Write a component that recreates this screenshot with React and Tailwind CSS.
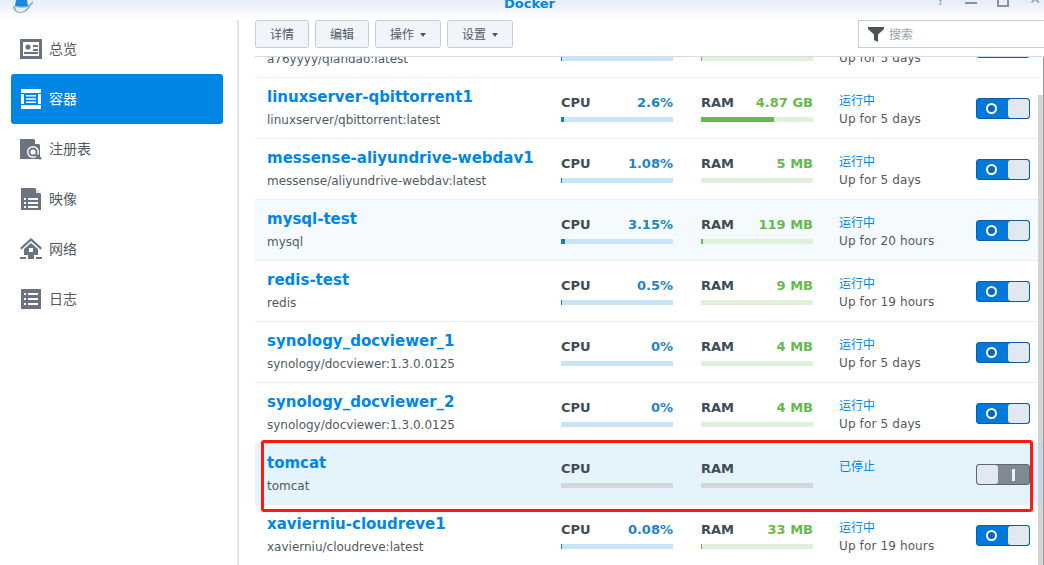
import React from 'react';

const font = 'font-["DejaVu_Sans","Noto_Sans_CJK_SC",sans-serif]';

const OverviewIcon = () => (
    <svg width="22" height="20" viewBox="0 0 22 20">
        <path fillRule="evenodd" fill="#6b7280" d="M0 0h22v20H0zM3 3v14h16V3z" />
        <circle cx="8" cy="8" r="2.600" fill="#6b7280" />
        <path d="M13 6h5v2h-5zM13 10h5v2h-5zM4 13h14v2H4z" fill="#6b7280" />
    </svg>
);

const ContainerIcon = () => (
    <svg width="20" height="20" viewBox="0 0 20 20" fill="#fff">
        <path fillRule="evenodd" d="M0 0h20v4H0zM0 16h20v4H0zM0 5h3v10H0zM17 5h3v10h-3zM5 6h10v1.500H5zM5 9.200h10v1.500H5zM5 12.500h10V14H5z" />
    </svg>
);

const RegistryIcon = () => (
    <svg width="22" height="21" viewBox="0 0 22 21">
        <path d="M0 0h14l6 6v14H0z" fill="#6b7280" />
        <path d="M15 0l5 5h-5z" fill="#fff" />
        <circle cx="13" cy="13" r="6" fill="#fff" />
        <circle cx="13" cy="13" r="3.600" fill="none" stroke="#6b7280" strokeWidth="2" />
        <path d="M16 16l5 4" stroke="#6b7280" strokeWidth="2.500" />
    </svg>
);

const ImageIcon = () => (
    <svg width="20" height="22" viewBox="0 0 20 22">
        <path d="M0 0h14l6 6v16H0z" fill="#6b7280" />
        <path d="M15 0l5 5h-5z" fill="#e5e7eb" />
        <path d="M3 10h2v2H3zM7 10h10v2H7zM3 14h2v2H3zM7 14h10v2H7zM3 18h2v2H3zM7 18h10v2H7z" fill="#fff" />
    </svg>
);

const NetworkIcon = () => (
    <svg width="22" height="22" viewBox="0 0 22 22">
        <path d="M11 0L0 10l1.500 1.500L11 3l9.500 8.500L22 10z" fill="#6b7280" />
        <path d="M4 11l7-6 7 6v6H4z" fill="#6b7280" />
        <rect x="9" y="10" width="4" height="4" fill="#fff" />
        <path d="M0 19h6v2H0zM16 19h6v2h-6zM8 17h6v4H8z" fill="#6b7280" />
    </svg>
);

const LogIcon = () => (
    <svg width="20" height="20" viewBox="0 0 20 20">
        <path d="M0 0h20v20H0z" fill="#6b7280" />
        <path d="M3 4h2v2H3zM7 4h10v2H7zM3 9h2v2H3zM7 9h10v2H7zM3 14h2v2H3zM7 14h10v2H7z" fill="#fff" />
    </svg>
);

const WhaleIcon = () => (
    <svg width="22" height="13" viewBox="0 0 22 13">
        <path d="M1 6c5 1 10 1 15 0 1-2 3-3 5-5 0 2 0 3-2 4-2 5-6 8-11 8C4 13 1 10 1 6z" fill="#8fb0c8" />
        <path d="M3 7c4 1 9 1 13 0-2 3-5 5-8 5-3 0-4-2-5-5z" fill="#e6f1fa" />
        <path d="M4 0h11l1 6c-4 1-9 1-13 0z" fill="#1e88dc" />
    </svg>
);

const navItems = [
    { name: '总览', icon: <OverviewIcon /> },
    { name: '容器', icon: <ContainerIcon />, active: true },
    { name: '注册表', icon: <RegistryIcon /> },
    { name: '映像', icon: <ImageIcon /> },
    { name: '网络', icon: <NetworkIcon /> },
    { name: '日志', icon: <LogIcon /> },
];

const containers = [
    { partial: true, image: 'a76yyyy/qiandao:latest', cpuPct: 1, ramPct: 1, status: 'Up for 5 days' },
    { name: 'linuxserver-qbittorrent1', image: 'linuxserver/qbittorrent:latest', cpu: '2.6%', cpuPct: 2.600, ram: '4.87 GB', ramPct: 65, status: 'Up for 5 days' },
    { name: 'messense-aliyundrive-webdav1', image: 'messense/aliyundrive-webdav:latest', cpu: '1.08%', cpuPct: 1.080, ram: '5 MB', ramPct: 0, status: 'Up for 5 days' },
    { name: 'mysql-test', image: 'mysql', cpu: '3.15%', cpuPct: 3.150, ram: '119 MB', ramPct: 1.500, status: 'Up for 20 hours', tint: true },
    { name: 'redis-test', image: 'redis', cpu: '0.5%', cpuPct: 0.500, ram: '9 MB', ramPct: 0, status: 'Up for 19 hours' },
    { name: 'synology_docviewer_1', image: 'synology/docviewer:1.3.0.0125', cpu: '0%', cpuPct: 0, ram: '4 MB', ramPct: 0, status: 'Up for 5 days' },
    { name: 'synology_docviewer_2', image: 'synology/docviewer:1.3.0.0125', cpu: '0%', cpuPct: 0, ram: '4 MB', ramPct: 0, status: 'Up for 5 days' },
    { name: 'tomcat', image: 'tomcat', stopped: true },
    { name: 'xavierniu-cloudreve1', image: 'xavierniu/cloudreve:latest', cpu: '0.08%', cpuPct: 0.080, ram: '33 MB', ramPct: 0.500, status: 'Up for 19 hours' },
];

const Toggle = ({ on }) =>
    on ? (
        <div className="flex h-[21px] w-[54px] rounded-[3px] border border-[#0b5fa8] bg-[#0079db]">
            <div className="flex w-[31px] items-center justify-center pr-[2px]">
                <div className="h-[11px] w-[11px] rounded-full border-[2px] border-white bg-[#0a62c4]" />
            </div>
            <div className="flex-1 rounded-[3px] bg-[#e1e8f2]" />
        </div>
    ) : (
        <div className="flex h-[21px] w-[54px] rounded-[3px] border border-[#5c6670] bg-[#7f8992]">
            <div className="w-[21px] rounded-[3px] bg-[#e1e8f2]" />
            <div className="flex flex-1 items-center justify-center">
                <div className="h-[12px] w-[3px] bg-[#eef1f4]" />
            </div>
        </div>
    );

const Meter = ({ label, value, pct, valueColor, trackColor, barColor }) => (
    <div className="w-[112px]">
        <div className="flex h-[15px] items-center justify-between text-[13px] font-bold leading-[15px]">
            {label && <span className="text-[#414b55]">{label}</span>}
            <span className={valueColor}>{value}</span>
        </div>
        <div className={`mt-[7px] h-[5px] ${trackColor}`}>
            <div className={`h-full ${barColor}`} style={{ width: `${pct}%` }} />
        </div>
    </div>
);

const ContainerRow = ({ item }) => {
    const bg = item.stopped ? 'bg-[#e5f3fd]' : item.tint ? 'bg-[#f5fafe]' : 'bg-white';
    return (
        <div className={`flex h-[61px] shrink-0 items-start border-b border-[#eceef0] ${bg}`}>
            <div className="w-[306px] pl-3 pt-[9px]">
                <div className="h-[20px] text-[15px] font-bold leading-[20px] text-[#0086e5]">{item.name}</div>
                <div className="mt-[4px] text-[12px] leading-[18px] text-[#505a64]">{item.image}</div>
            </div>
            <div className="pt-[17px]">
                <Meter
                    label={item.partial ? null : 'CPU'}
                    value={item.cpu}
                    pct={item.stopped ? 0 : item.cpuPct}
                    valueColor="text-[#1f84c4]"
                    trackColor={item.stopped ? 'bg-[#d3d6d9]' : 'bg-[#c9e3f7]'}
                    barColor="bg-[#1a7db8]"
                />
            </div>
            <div className="ml-7 pt-[17px]">
                <Meter
                    label={item.partial ? null : 'RAM'}
                    value={item.ram}
                    pct={item.stopped ? 0 : item.ramPct}
                    valueColor="text-[#66b94f]"
                    trackColor={item.stopped ? 'bg-[#d3d6d9]' : 'bg-[#e0f0da]'}
                    barColor="bg-[#65b94f]"
                />
            </div>
            <div className="ml-[26px] w-[137px] pt-[14px]">
                <div className="h-[18px] text-[12px] leading-[18px] text-[#0086e5]">
                    {item.partial ? '' : item.stopped ? '已停止' : '运行中'}
                </div>
                <div className="text-[12px] leading-[18px] tracking-[0.13px] text-[#505a64]">{item.status}</div>
            </div>
            <div className="pt-[20px]">
                <Toggle on={!item.stopped} />
            </div>
        </div>
    );
};

const ToolButton = ({ label, caret, width }) => (
    <button className={`flex h-[28px] items-center justify-center gap-[6px] rounded-[3px] border border-[#c4ccd8] bg-[#f1f5f9] pt-[1px] text-[12px] text-[#505a64] ${width}`}>
        {label}
        {caret && <span className="mt-[1px] h-0 w-0 border-x-[3.500px] border-t-[4px] border-x-transparent border-t-[#505a64]" />}
    </button>
);

export default function App() {
    return (
        <div className={`relative flex h-[565px] w-[1044px] flex-col overflow-hidden bg-white ${font}`}>
            {/* Title bar */}
            <div className="flex h-[20px] shrink-0 items-start overflow-hidden bg-gradient-to-b from-[#e4edf8] to-white">
                <div className="ml-3">
                    <WhaleIcon />
                </div>
                <div className="ml-[470px] -mt-[4px] text-[13px] font-bold leading-[16px] text-[#0086e5]">Docker</div>
                <div className="ml-auto mr-[3px] flex items-start gap-[20px] text-[#8a929a]">
                    <span className="-mt-[8px] w-[8px] text-[14px] leading-[16px]">?</span>
                    <span className="mt-[2px] h-[2px] w-[12px] bg-[#8a929a]" />
                    <span className="-mt-[4px] h-[11px] w-[12px] border-2 border-[#8a929a]" />
                    <span className="-mt-[9px] w-[12px] text-center text-[14px] leading-[16px]">✕</span>
                </div>
            </div>

            <div className="flex min-h-0 flex-1">
                {/* Sidebar */}
                <aside className="w-[239px] shrink-0 border-r-2 border-[#e3e5e8] pl-[11px] pr-[14px] pt-[4px]">
                    {navItems.map((item) => (
                        <div
                            key={item.name}
                            className={`flex h-[50px] items-center rounded-[3px] pl-[9px] text-[14px] ${item.active ? 'bg-[#0086e5] text-white' : 'text-[#505a64]'}`}
                        >
                            <div className="flex w-[22px] justify-center">{item.icon}</div>
                            <span className="ml-[7px]">{item.name}</span>
                        </div>
                    ))}
                </aside>

                {/* Main */}
                <main className="relative flex min-w-0 flex-1 flex-col pl-[16px]">
                    <div className="flex h-[37px] shrink-0 items-start border-b border-[#d5dce6]">
                        <div className="flex gap-[6px]">
                            <ToolButton label="详情" width="w-[54px]" />
                            <ToolButton label="编辑" width="w-[54px]" />
                            <ToolButton label="操作" caret width="w-[66px]" />
                            <ToolButton label="设置" caret width="w-[66px]" />
                        </div>
                        <div className="ml-auto flex h-[28px] w-[186px] items-center border border-r-0 border-[#c4ccd8] bg-white pl-[9px] text-[12px] text-[#9aa2aa]">
                            <svg width="16" height="16" viewBox="0 0 16 16" fill="#4a525a">
                                <path d="M0 1h16v2l-6 5.500V16l-4-2V8.500L0 3z" />
                            </svg>
                            <span className="ml-[5px] pt-[1px]">搜索</span>
                        </div>
                    </div>

                    <div className="flex min-h-0 flex-1 flex-col overflow-hidden pr-[6px]">
                        <div className="-mt-[40px]">
                            {containers.map((item, i) => (
                                <ContainerRow key={i} item={item} />
                            ))}
                        </div>
                    </div>

                    {/* Scrollbar thumb, the selected row tints it */}
                    <div className="absolute bottom-0 right-[1px] top-[75px] w-[5px] bg-[#d2d4d6]">
                        <div className="mt-[349px] h-[61px] bg-[#c2d6e3]" />
                    </div>
                    <div className="absolute bottom-0 right-0 top-[37px] w-px bg-[#9a9a9a]" />
                </main>
            </div>

            {/* Annotation drawn over the screenshot */}
            <div className="absolute left-[261px] top-[440px] h-[72px] w-[772px] rounded-[3px] border-[3px] border-[#ff1a0d]" />
        </div>
    );
}
